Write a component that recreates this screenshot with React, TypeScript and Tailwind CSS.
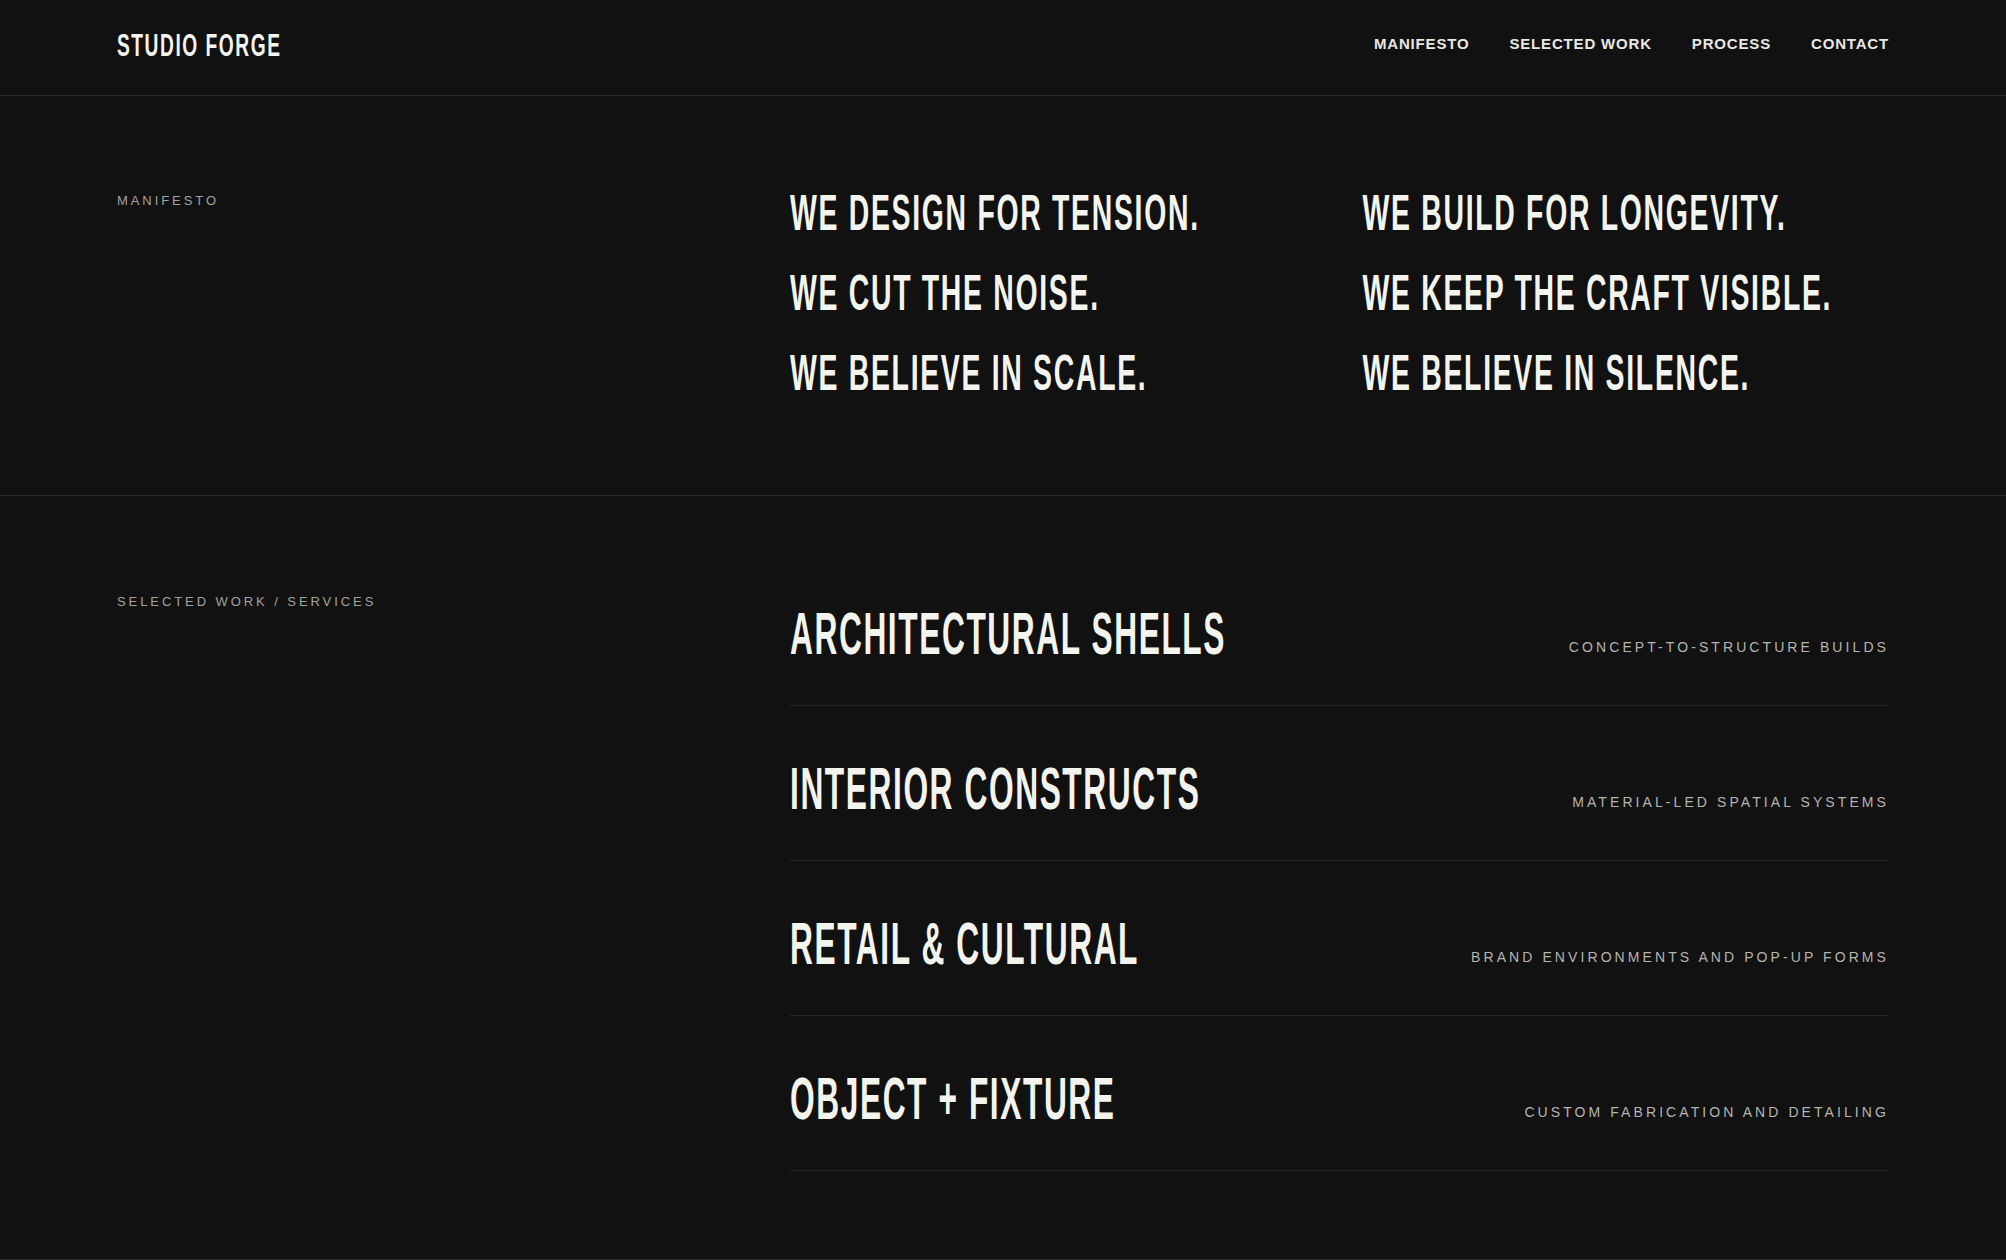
import React from 'react';

const navLinks = ['Manifesto', 'Selected Work', 'Process', 'Contact'];

const manifestoLeft = ['We design for tension.', 'We cut the noise.', 'We believe in scale.'];
const manifestoRight = ['We build for longevity.', 'We keep the craft visible.', 'We believe in silence.'];

const services = [
  { title: 'Architectural Shells', detail: 'Concept-to-structure builds' },
  { title: 'Interior Constructs', detail: 'Material-led spatial systems' },
  { title: 'Retail & Cultural', detail: 'Brand environments and pop-up forms' },
  { title: 'Object + Fixture', detail: 'Custom fabrication and detailing' },
];

// tall condensed display type: set small, then stretched vertically
const display = "font-['Liberation_Sans','Arial',sans-serif] font-bold uppercase text-[#f4f4ef] inline-block whitespace-nowrap";
const body = "font-['Liberation_Sans','Arial',sans-serif]";

function SectionLabel({ children, offset }: { children: React.ReactNode; offset: string }) {
  return (
    <p className={`${body} ${offset} text-[13px] leading-[20px] uppercase tracking-[0.225em] text-[#a1a1a1]`}>
      {children}
    </p>
  );
}

export default function App() {
  return (
    <div className="min-h-screen bg-[#111111] text-[#f4f4ef]">
      {/* Top bar */}
      <header className="h-[96px] border-b border-[#2a2a2a] px-[117px] pb-[8px] flex items-center justify-between">
        <span className={`${display} mt-[5px] text-[19.2px] leading-none tracking-[0.08em] scale-y-[1.63]`}>Studio Forge</span>
        <nav className={`${body} flex items-center gap-[40px] text-[15px] font-bold uppercase tracking-[0.055em] text-[#e8e8e4]`}>
          {navLinks.map((link) => (
            <a key={link} href="#" className="leading-none">
              {link}
            </a>
          ))}
        </nav>
      </header>

      {/* Manifesto */}
      <section className="border-b border-[#2a2a2a] px-[117px] pt-[76px] pb-[83px] grid grid-cols-[673px_1fr]">
        <SectionLabel offset="mt-[19px]">Manifesto</SectionLabel>
        <div className="grid grid-cols-2 gap-x-[46px]">
          {[manifestoLeft, manifestoRight].map((col, i) => (
            <div key={i} className="flex flex-col">
              {col.map((line) => (
                <div key={line} className="h-[80px]">
                  <span className={`${display} text-[28.4px] leading-[80px] tracking-[0.06em] scale-y-[1.77]`}>{line}</span>
                </div>
              ))}
            </div>
          ))}
        </div>
      </section>

      {/* Selected work / services */}
      <section className="border-b border-[#2a2a2a] px-[117px] pt-[55px] pb-[88px] grid grid-cols-[673px_1fr]">
        <SectionLabel offset="mt-[41px]">Selected Work / Services</SectionLabel>
        <div className="flex flex-col">
          {services.map((s) => (
            <div key={s.title} className="flex items-end justify-between border-b border-[#262626] pt-[51px] pb-[39px]">
              <span className={`${display} text-[31.7px] leading-[64px] tracking-[0.05em] scale-y-[1.85]`}>{s.title}</span>
              <span className={`${body} mb-[11px] text-[14px] leading-[16px] uppercase tracking-[0.22em] text-[#b4b4b0]`}>
                {s.detail}
              </span>
            </div>
          ))}
        </div>
      </section>
    </div>
  );
}
